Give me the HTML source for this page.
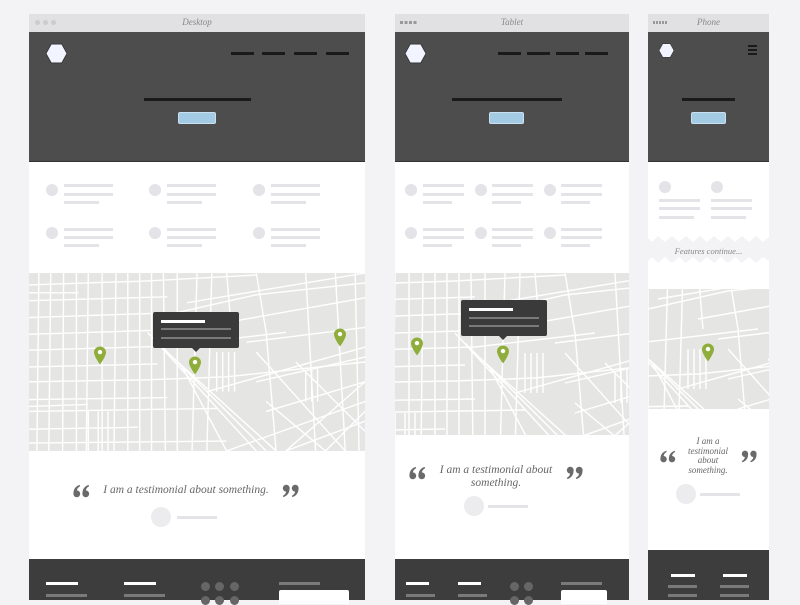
<!DOCTYPE html>
<html><head><meta charset="utf-8"><style>
*{margin:0;padding:0;box-sizing:border-box}
body{width:800px;height:600px;background:#f3f3f5;position:relative;overflow:hidden;font-family:"Liberation Serif",serif}
.a{position:absolute}
.tb{background:#e1e1e3;color:#888;font-style:italic;font-size:9px;text-align:center;line-height:17px}
.hero{background:#4d4d4d;border-bottom:1px solid #333}
.w{background:#fff}
.ft{background:#3d3d3d}
.k{background:#1a1a1a;height:3px}
.btn{background:#a4cbe4;border:1px solid #c8e0ef;border-radius:2px}
.c{border-radius:50%;background:#e3e3e8}
.l{background:#e3e3e8;height:3px}
.wl{background:#fff;height:3px}
.gl{background:#7a7a7a;height:3px}
.d{border-radius:50%;background:#666}
.t{color:#666;font-style:italic;text-align:center}
</style></head><body>
<svg width="0" height="0" style="position:absolute">
<defs>
<symbol id="map" viewBox="0 0 340 180">
<rect width="340" height="180" fill="#e5e6e4"/>
<g stroke="#fff" stroke-width="1.4" fill="none">
<path d="M0 12L120 8 L230 2M0 28L140 24M0 45L150 40 230 22 340 10M0 62L125 58M0 78L140 74 260 60M0 95L130 92M0 110L120 108 200 105 340 90M0 128L140 126M0 140L190 137M0 158L110 156M0 172L200 170"/>
<path d="M10 0L8 180M22 0L20 180M35 0L34 180M48 0L48 180M60 0L58 180M74 0L74 180M88 0L86 180M100 0L100 180M112 0L112 180M124 0L124 180M136 0L138 180M150 0L150 180"/>
<path d="M120 60L230 180M130 70L240 180M145 85L250 180M155 95L200 180M170 0L165 180M185 0L180 180"/>
<path d="M160 30L340 0M200 50L340 25M220 70L340 55M180 120L340 75M230 110L340 85M240 140L340 110M200 180L340 130M260 180L340 150"/>
<path d="M230 0L240 60 250 180M280 0L290 180M310 0L320 180M330 0L334 180M200 0L205 60"/>
<path d="M260 180L340 110M300 180L340 140M240 130L300 180M230 80L320 180M270 90L340 160" />
<path d="M0 20L50 20M0 135L60 133M60 140L60 180M70 140L70 180M80 140L80 180M190 80L190 120M196 80L196 120M202 80L202 120M208 80L208 120M280 100L280 130M286 98L286 130M292 96L292 130"/>
</g>
</symbol>
<symbol id="pin" viewBox="0 0 12 18"><path d="M6 0C2.7 0 0 2.6 0 5.8 0 10 6 18 6 18S12 10 12 5.8C12 2.6 9.3 0 6 0Z" fill="#8fad3a"/><circle cx="6" cy="5.6" r="2.2" fill="#fff"/></symbol>
<symbol id="hex" viewBox="0 0 20 20"><polygon points="5,1 15,1 20,10 15,19 5,19 0,10" fill="#f2f5ff" stroke="#333" stroke-width=".8"/></symbol>
<symbol id="oq" viewBox="0 0 18 14"><g fill="#6a6a6a"><circle cx="4" cy="10" r="3.6"/><path d="M0.6 10C0.2 5.5 2.5 2 7 0.5L7.6 1.8C4.8 3.4 3.8 5.5 4.2 8Z"/><circle cx="13.5" cy="10" r="3.6"/><path d="M10.1 10C9.7 5.5 12 2 16.5 0.5L17.1 1.8C14.3 3.4 13.3 5.5 13.7 8Z"/></g></symbol>
<symbol id="cq" viewBox="0 0 18 14"><g fill="#6a6a6a" transform="rotate(180 9 7)"><circle cx="4" cy="10" r="3.6"/><path d="M0.6 10C0.2 5.5 2.5 2 7 0.5L7.6 1.8C4.8 3.4 3.8 5.5 4.2 8Z"/><circle cx="13.5" cy="10" r="3.6"/><path d="M10.1 10C9.7 5.5 12 2 16.5 0.5L17.1 1.8C14.3 3.4 13.3 5.5 13.7 8Z"/></g></symbol>
</defs></svg>

<!-- DESKTOP -->
<div class="a tb" style="left:29px;top:14px;width:336px;height:18px">Desktop</div>
<div class="a d" style="left:35px;top:20px;width:5px;height:5px;background:#ccc"></div>
<div class="a d" style="left:43px;top:20px;width:5px;height:5px;background:#ccc"></div>
<div class="a d" style="left:51px;top:20px;width:5px;height:5px;background:#ccc"></div>
<div class="a hero" style="left:29px;top:32px;width:336px;height:130px"></div>
<svg class="a" style="left:46px;top:43px" width="21" height="21"><use href="#hex"/></svg>
<div class="a k" style="left:231px;top:52px;width:23px"></div>
<div class="a k" style="left:262px;top:52px;width:23px"></div>
<div class="a k" style="left:294px;top:52px;width:23px"></div>
<div class="a k" style="left:326px;top:52px;width:23px"></div>
<div class="a k" style="left:144px;top:98px;width:107px"></div>
<div class="a btn" style="left:178px;top:112px;width:38px;height:12px"></div>
<div class="a w" style="left:29px;top:162px;width:336px;height:111px"></div>
<div class="a c" style="left:46px;top:184px;width:12px;height:12px"></div>
<div class="a l" style="left:64px;top:184px;width:49px"></div><div class="a l" style="left:64px;top:193px;width:49px"></div><div class="a l" style="left:64px;top:201px;width:35px"></div>
<div class="a c" style="left:149px;top:184px;width:12px;height:12px"></div>
<div class="a l" style="left:167px;top:184px;width:49px"></div><div class="a l" style="left:167px;top:193px;width:49px"></div><div class="a l" style="left:167px;top:201px;width:35px"></div>
<div class="a c" style="left:253px;top:184px;width:12px;height:12px"></div>
<div class="a l" style="left:271px;top:184px;width:49px"></div><div class="a l" style="left:271px;top:193px;width:49px"></div><div class="a l" style="left:271px;top:201px;width:35px"></div>
<div class="a c" style="left:46px;top:227px;width:12px;height:12px"></div>
<div class="a l" style="left:64px;top:228px;width:49px"></div><div class="a l" style="left:64px;top:236px;width:49px"></div><div class="a l" style="left:64px;top:244px;width:35px"></div>
<div class="a c" style="left:149px;top:227px;width:12px;height:12px"></div>
<div class="a l" style="left:167px;top:228px;width:49px"></div><div class="a l" style="left:167px;top:236px;width:49px"></div><div class="a l" style="left:167px;top:244px;width:35px"></div>
<div class="a c" style="left:253px;top:227px;width:12px;height:12px"></div>
<div class="a l" style="left:271px;top:228px;width:49px"></div><div class="a l" style="left:271px;top:236px;width:49px"></div><div class="a l" style="left:271px;top:244px;width:35px"></div>
<svg class="a" style="left:29px;top:273px" width="336" height="178"><use href="#map" width="336" height="178"/></svg>
<svg class="a" style="left:94px;top:346px" width="12" height="19"><use href="#pin"/></svg>
<svg class="a" style="left:189px;top:356px" width="12" height="19"><use href="#pin"/></svg>
<svg class="a" style="left:334px;top:328px" width="12" height="19"><use href="#pin"/></svg>
<div class="a" style="left:153px;top:312px;width:86px;height:36px;background:#3a3a3a;border-radius:2px"></div>
<div class="a" style="left:191px;top:347px;width:0;height:0;border-left:5px solid transparent;border-right:5px solid transparent;border-top:5px solid #3a3a3a"></div>
<div class="a wl" style="left:161px;top:320px;width:44px"></div>
<div class="a gl" style="left:161px;top:328px;width:70px;height:2px"></div>
<div class="a gl" style="left:161px;top:337px;width:70px;height:2px"></div>
<div class="a w" style="left:29px;top:451px;width:336px;height:108px"></div>
<svg class="a" style="left:73px;top:484px" width="17" height="14"><use href="#oq"/></svg>
<svg class="a" style="left:282px;top:484px" width="17" height="14"><use href="#cq"/></svg>
<div class="a t" style="left:96px;top:484px;width:180px;font-size:11.5px">I am a testimonial about something.</div>
<div class="a c" style="left:151px;top:507px;width:20px;height:20px;background:#ececee"></div>
<div class="a l" style="left:177px;top:516px;width:40px"></div>
<div class="a ft" style="left:29px;top:559px;width:336px;height:41px"></div>
<div class="a wl" style="left:46px;top:582px;width:32px"></div>
<div class="a wl" style="left:124px;top:582px;width:32px"></div>
<div class="a gl" style="left:46px;top:594px;width:41px"></div>
<div class="a gl" style="left:124px;top:594px;width:41px"></div>
<div class="a d" style="left:201px;top:582px;width:9px;height:9px"></div>
<div class="a d" style="left:215px;top:582px;width:9px;height:9px"></div>
<div class="a d" style="left:230px;top:582px;width:9px;height:9px"></div>
<div class="a d" style="left:201px;top:596px;width:9px;height:9px"></div>
<div class="a d" style="left:215px;top:596px;width:9px;height:9px"></div>
<div class="a d" style="left:230px;top:596px;width:9px;height:9px"></div>
<div class="a gl" style="left:279px;top:582px;width:41px"></div>
<div class="a" style="left:279px;top:590px;width:70px;height:14px;background:#fff;border-radius:2px"></div>

<!-- TABLET -->
<div class="a tb" style="left:395px;top:14px;width:234px;height:18px">Tablet</div>
<div class="a" style="left:400px;top:21px;width:18px;height:3px;background:repeating-linear-gradient(90deg,#999 0 3px,transparent 3px 4.5px)"></div>
<div class="a hero" style="left:395px;top:32px;width:234px;height:130px"></div>
<svg class="a" style="left:405px;top:43px" width="21" height="21"><use href="#hex"/></svg>
<div class="a k" style="left:498px;top:52px;width:23px"></div>
<div class="a k" style="left:527px;top:52px;width:23px"></div>
<div class="a k" style="left:556px;top:52px;width:23px"></div>
<div class="a k" style="left:585px;top:52px;width:23px"></div>
<div class="a k" style="left:452px;top:98px;width:110px"></div>
<div class="a btn" style="left:489px;top:112px;width:35px;height:12px"></div>
<div class="a w" style="left:395px;top:162px;width:234px;height:111px"></div>
<div class="a c" style="left:405px;top:184px;width:12px;height:12px"></div>
<div class="a l" style="left:423px;top:184px;width:41px"></div><div class="a l" style="left:423px;top:193px;width:41px"></div><div class="a l" style="left:423px;top:201px;width:29px"></div>
<div class="a c" style="left:475px;top:184px;width:12px;height:12px"></div>
<div class="a l" style="left:492px;top:184px;width:41px"></div><div class="a l" style="left:492px;top:193px;width:41px"></div><div class="a l" style="left:492px;top:201px;width:29px"></div>
<div class="a c" style="left:544px;top:184px;width:12px;height:12px"></div>
<div class="a l" style="left:561px;top:184px;width:41px"></div><div class="a l" style="left:561px;top:193px;width:41px"></div><div class="a l" style="left:561px;top:201px;width:29px"></div>
<div class="a c" style="left:405px;top:227px;width:12px;height:12px"></div>
<div class="a l" style="left:423px;top:228px;width:41px"></div><div class="a l" style="left:423px;top:236px;width:41px"></div><div class="a l" style="left:423px;top:244px;width:29px"></div>
<div class="a c" style="left:475px;top:227px;width:12px;height:12px"></div>
<div class="a l" style="left:492px;top:228px;width:41px"></div><div class="a l" style="left:492px;top:236px;width:41px"></div><div class="a l" style="left:492px;top:244px;width:29px"></div>
<div class="a c" style="left:544px;top:227px;width:12px;height:12px"></div>
<div class="a l" style="left:561px;top:228px;width:41px"></div><div class="a l" style="left:561px;top:236px;width:41px"></div><div class="a l" style="left:561px;top:244px;width:29px"></div>
<svg class="a" style="left:395px;top:273px" width="234" height="162" viewBox="60 0 234 162" preserveAspectRatio="none"><use href="#map" width="340" height="180"/></svg>
<svg class="a" style="left:411px;top:337px" width="12" height="19"><use href="#pin"/></svg>
<svg class="a" style="left:497px;top:345px" width="12" height="19"><use href="#pin"/></svg>
<div class="a" style="left:461px;top:300px;width:86px;height:36px;background:#3a3a3a;border-radius:2px"></div>
<div class="a" style="left:498px;top:335px;width:0;height:0;border-left:5px solid transparent;border-right:5px solid transparent;border-top:5px solid #3a3a3a"></div>
<div class="a wl" style="left:469px;top:308px;width:44px"></div>
<div class="a gl" style="left:469px;top:317px;width:70px;height:2px"></div>
<div class="a gl" style="left:469px;top:325px;width:70px;height:2px"></div>
<div class="a w" style="left:395px;top:435px;width:234px;height:124px"></div>
<svg class="a" style="left:409px;top:466px" width="17" height="14"><use href="#oq"/></svg>
<svg class="a" style="left:566px;top:466px" width="17" height="14"><use href="#cq"/></svg>
<div class="a t" style="left:432px;top:464px;width:128px;font-size:11.5px;line-height:12.5px">I am a testimonial about something.</div>
<div class="a c" style="left:464px;top:496px;width:20px;height:20px;background:#ececee"></div>
<div class="a l" style="left:488px;top:505px;width:40px"></div>
<div class="a ft" style="left:395px;top:559px;width:234px;height:41px"></div>
<div class="a wl" style="left:406px;top:582px;width:23px"></div>
<div class="a wl" style="left:458px;top:582px;width:23px"></div>
<div class="a gl" style="left:406px;top:594px;width:29px"></div>
<div class="a gl" style="left:458px;top:594px;width:29px"></div>
<div class="a d" style="left:510px;top:582px;width:9px;height:9px"></div>
<div class="a d" style="left:524px;top:582px;width:9px;height:9px"></div>
<div class="a d" style="left:510px;top:596px;width:9px;height:9px"></div>
<div class="a d" style="left:524px;top:596px;width:9px;height:9px"></div>
<div class="a gl" style="left:561px;top:582px;width:41px"></div>
<div class="a" style="left:561px;top:590px;width:46px;height:14px;background:#fff;border-radius:2px"></div>

<!-- PHONE -->
<div class="a tb" style="left:648px;top:14px;width:121px;height:18px">Phone</div>
<div class="a" style="left:653px;top:21px;width:15px;height:3px;background:repeating-linear-gradient(90deg,#999 0 2px,transparent 2px 3px)"></div>
<div class="a hero" style="left:648px;top:32px;width:121px;height:130px"></div>
<svg class="a" style="left:659px;top:43px" width="15" height="15"><use href="#hex"/></svg>
<div class="a k" style="left:748px;top:45px;width:9px;height:2px"></div>
<div class="a k" style="left:748px;top:49px;width:9px;height:2px"></div>
<div class="a k" style="left:748px;top:53px;width:9px;height:2px"></div>
<div class="a k" style="left:682px;top:98px;width:53px"></div>
<div class="a btn" style="left:691px;top:112px;width:35px;height:12px"></div>
<div class="a w" style="left:648px;top:162px;width:121px;height:72px"></div>
<svg class="a" style="left:648px;top:233px" width="121" height="10"><polygon fill="#fff" points="0,0 121,0 121,4 115,9 108,3 101,9 94,3 87,9 80,3 73,9 66,3 59,9 52,3 45,9 38,3 31,9 24,3 17,9 10,3 4,9 0,5"/></svg>
<div class="a t" style="left:648px;top:246px;width:121px;font-size:8.5px;color:#888">Features continue...</div>
<svg class="a" style="left:648px;top:256px" width="121" height="10"><polygon fill="#fff" points="0,10 121,10 121,5 115,1 108,7 101,1 94,7 87,1 80,7 73,1 66,7 59,1 52,7 45,1 38,7 31,1 24,7 17,1 10,7 4,1 0,5"/></svg>
<div class="a w" style="left:648px;top:265px;width:121px;height:24px"></div>
<div class="a c" style="left:659px;top:181px;width:12px;height:12px"></div>
<div class="a c" style="left:711px;top:181px;width:12px;height:12px"></div>
<div class="a l" style="left:659px;top:199px;width:41px"></div><div class="a l" style="left:659px;top:207px;width:41px"></div><div class="a l" style="left:659px;top:216px;width:35px"></div>
<div class="a l" style="left:711px;top:199px;width:41px"></div><div class="a l" style="left:711px;top:207px;width:41px"></div><div class="a l" style="left:711px;top:216px;width:35px"></div>
<svg class="a" style="left:648px;top:289px" width="121" height="120" viewBox="150 20 121 120" preserveAspectRatio="none"><use href="#map" width="340" height="180"/></svg>
<svg class="a" style="left:702px;top:343px" width="12" height="19"><use href="#pin"/></svg>
<div class="a w" style="left:648px;top:409px;width:121px;height:141px"></div>
<svg class="a" style="left:660px;top:450px" width="16" height="13"><use href="#oq"/></svg>
<svg class="a" style="left:741px;top:450px" width="16" height="13"><use href="#cq"/></svg>
<div class="a t" style="left:680px;top:437px;width:56px;font-size:9px;line-height:9.5px">I am a testimonial about something.</div>
<div class="a c" style="left:676px;top:484px;width:20px;height:20px;background:#ececee"></div>
<div class="a l" style="left:700px;top:493px;width:40px"></div>
<div class="a ft" style="left:648px;top:550px;width:121px;height:50px"></div>
<div class="a wl" style="left:671px;top:574px;width:24px"></div>
<div class="a wl" style="left:723px;top:574px;width:24px"></div>
<div class="a gl" style="left:668px;top:585px;width:29px"></div>
<div class="a gl" style="left:720px;top:585px;width:29px"></div>
<div class="a gl" style="left:668px;top:594px;width:29px"></div>
<div class="a gl" style="left:720px;top:594px;width:29px"></div>
</body></html>
